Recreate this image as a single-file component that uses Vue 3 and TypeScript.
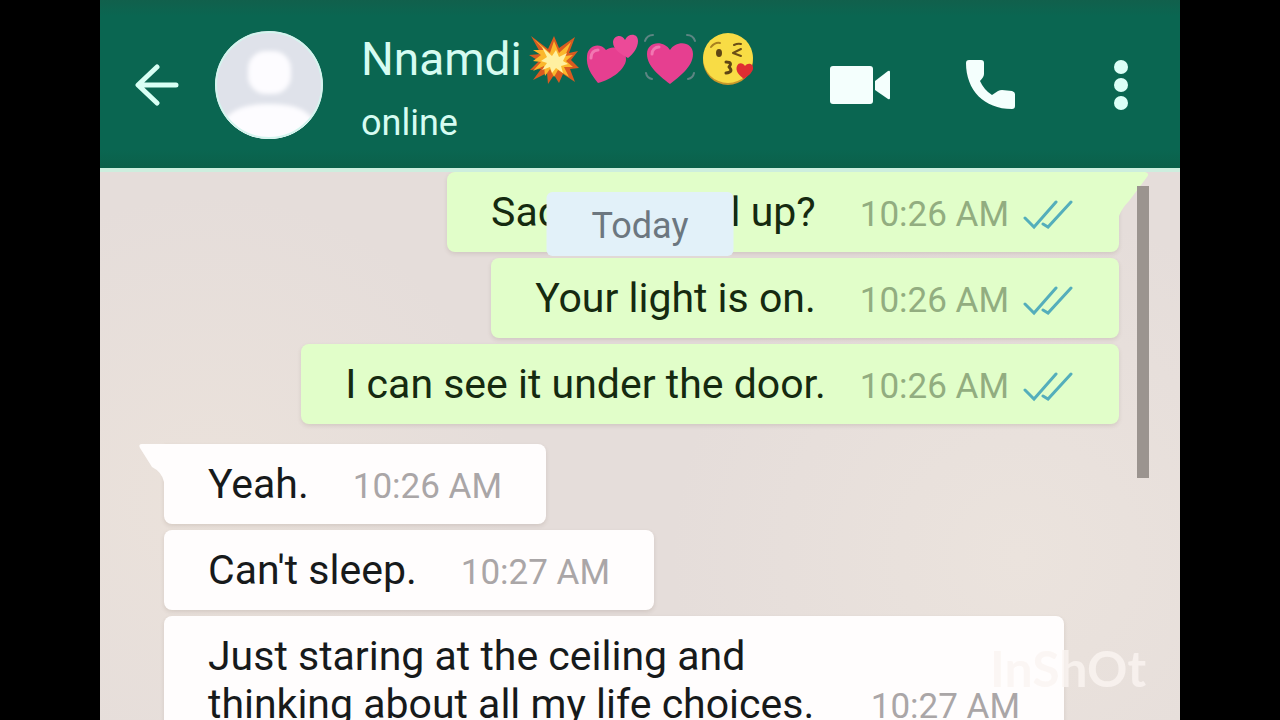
<script setup lang="ts">
interface Message {
  id: number
  text: string
  time: string
  snug?: boolean
}

const sent: Message[] = [
  { id: 1, text: 'Sade, you still up?', time: '10:26 AM' },
  { id: 2, text: 'Your light is on.', time: '10:26 AM' },
  { id: 3, text: 'I can see it under the door.', time: '10:26 AM', snug: true },
]

const received: Message[] = [
  { id: 4, text: 'Yeah.', time: '10:26 AM' },
  { id: 5, text: "Can't sleep.", time: '10:27 AM' },
  { id: 6, text: 'Just staring at the ceiling and thinking about all my life choices.', time: '10:27 AM' },
]
</script>

<template>
  <div class="stage">
    <main class="phone">
      <header class="bar">
        <button class="icon back" type="button" aria-label="Back">
          <svg width="44" height="44" viewBox="0 0 44 44" fill="none" stroke="#d8fff4" stroke-width="5" stroke-linecap="round" stroke-linejoin="round">
            <path d="M41 22H4M22 4L3 22l19 18" />
          </svg>
        </button>
        <svg class="avatar" viewBox="0 0 108 108" role="img" aria-label="Profile picture">
          <defs>
            <clipPath id="face"><circle cx="54" cy="54" r="54" /></clipPath>
            <filter id="soft"><feGaussianBlur stdDeviation="2" /></filter>
          </defs>
          <g clip-path="url(#face)">
            <rect width="108" height="108" fill="#dfe2ea" />
            <g fill="#fdfcff" filter="url(#soft)">
              <rect x="33" y="20" width="43" height="43" rx="18" />
              <path d="M10 88C18 78 30 73 54 73s36 5 44 15v34H10z" />
            </g>
            <circle cx="54" cy="54" r="53" fill="none" stroke="#d3f5ee" stroke-width="2" />
          </g>
        </svg>
        <div class="who">
          <h1 class="name">
            <span>Nnamdi</span>
            <span class="emojis">
              <svg viewBox="0 0 52 52" role="img" aria-label="Collision">
                <path d="M3 3l17 13 6-13 5 12L47 4l-6 16 9-2-7 9 8 8-9 1 5 13-12-8-4 9-5-8-6 9-1-11-14 7 8-11-11 1 9-9-10-6 12-1z" fill="#d95b20" />
                <path d="M6 6l16 14 4-12 5 12 12-11-6 14 8-1-7 6 7 6-9 0 5 10-11-7-4 7-4-8-5 7-1-10-11 5 8-9-8-1 8-6-8-5 11 0z" fill="#fbb72c" />
                <path d="M14 14l10 9 4-6 3 7 8-4-4 8 5 3-7 2 2 7-7-5-4 5-2-6-8 3 5-7-6-2 6-4z" fill="#fff0a0" />
              </svg>
              <svg viewBox="0 0 52 52" role="img" aria-label="Two hearts">
                <path d="M12 50C5 41 0 34 1 23 2 12 14 9 20 17c7-6 21-1 20 10-1 9-13 19-28 23z" fill="#e63f90" />
                <path d="M42 25c-7-4-15-8-15-16 1-7 9-8 12-2 3-7 13-7 13 1 0 7-5 13-10 17z" fill="#ec4a98" />
                <path d="M5 25c0-5 3-8 7-8" fill="none" stroke="#f277b2" stroke-width="3" stroke-linecap="round" />
              </svg>
              <svg viewBox="0 0 52 52" role="img" aria-label="Beating heart">
                <path d="M26 51C17 44 3 34 3 21 3 8 20 7 26 17 32 7 49 8 49 21c0 13-14 23-23 30z" fill="#e63f90" />
                <path d="M8 21c0-4 3-7 7-7" fill="none" stroke="#f277b2" stroke-width="3" stroke-linecap="round" />
                <path d="M1 8q2-6 8-6M43 2q6 0 8 6M2 40q1 5 6 6M50 40q-1 5-6 6" fill="none" stroke="#5d8583" stroke-width="2" stroke-linecap="round" />
              </svg>
              <svg viewBox="0 0 52 52" role="img" aria-label="Face blowing a kiss">
                <circle cx="26" cy="27" r="25" fill="#c9982b" />
                <circle cx="26" cy="25" r="25" fill="#f8dc45" />
                <path d="M9 14q4-5 9-4" fill="none" stroke="#a8801f" stroke-width="2" stroke-linecap="round" />
                <ellipse cx="17" cy="20" rx="3" ry="4" fill="#5e4514" />
                <path d="M39 16l-8 4 8 3M32 12q4-2 7-1" fill="none" stroke="#6b4f16" stroke-width="2" stroke-linecap="round" stroke-linejoin="round" />
                <path d="M24 29q7 0 3 5 5 5-3 6" fill="none" stroke="#5e4514" stroke-width="3" stroke-linecap="round" stroke-linejoin="round" />
                <path d="M42 46C37 42 33 38 35 33c2-4 6-3 8 0 3-4 9-2 8 3-1 4-5 7-9 10z" fill="#df2d32" />
              </svg>
            </span>
          </h1>
          <p class="status">online</p>
        </div>
        <button class="icon video" type="button" aria-label="Video call">
          <svg width="60" height="38" viewBox="0 0 60 38" fill="#f4fffd">
            <rect width="43" height="38" rx="3" />
            <path d="M45 15L58 5q2-1 2 1v26q0 2-2 1L45 24z" />
          </svg>
        </button>
        <button class="icon call" type="button" aria-label="Voice call">
          <svg width="50" height="50" viewBox="0 0 50 50" fill="#f4fffd">
            <path d="M3 0H15q3 0 3 3v11q0 3-4 7q4 9 12 14l6-4q2-1 4-1l10 1q3 1 3 3v12q0 3-3 3C18 49 0 30 0 3q0-3 3-3z" />
          </svg>
        </button>
        <button class="icon" type="button" aria-label="More options">
          <svg width="14" height="50" viewBox="0 0 14 50" fill="#dcfff7">
            <circle cx="7" cy="7" r="7" />
            <circle cx="7" cy="25" r="7" />
            <circle cx="7" cy="43" r="7" />
          </svg>
        </button>
      </header>

      <section class="chat">
        <ul class="group sent">
          <li v-for="(m, i) in sent" :key="m.id" class="bubble" :class="{ snug: m.snug }">
            <svg v-if="i === 0" class="tail" width="30" height="44" viewBox="0 0 30 44" fill="#e1fec9">
              <path d="M0 0H26q5 1 2 5L10 29Q3 36 0 44z" />
            </svg>
            <p class="text">{{ m.text }}</p>
            <time class="time">{{ m.time }}</time>
            <svg class="ticks" width="50" height="30" viewBox="0 0 50 30" fill="none" stroke="#54aebb" stroke-width="3" stroke-linecap="round" role="img" aria-label="Read">
              <path d="M2 18l9 9L33 2M20 24l5 3L48 2" />
            </svg>
          </li>
        </ul>
        <ul class="group received">
          <li v-for="(m, i) in received" :key="m.id" class="bubble">
            <svg v-if="i === 0" class="tail" width="28" height="38" viewBox="0 0 28 38" fill="#fffdfd">
              <path d="M28 0H4Q0 0 2 4L14 23Q24 28 26 38h2z" />
            </svg>
            <p class="text">{{ m.text }}</p>
            <time class="time">{{ m.time }}</time>
          </li>
        </ul>
        <div class="day">Today</div>
        <div class="scrollbar"></div>
        <div class="watermark">InShOt</div>
      </section>
    </main>
  </div>
</template>

<style>
body {
  margin: 0;
  background: #000;
}
</style>

<style scoped>
.stage {
  box-sizing: border-box;
  height: 100vh;
  padding: 0 100px;
  background: #000;
  font-family: Roboto, 'Noto Sans', sans-serif;
}
.phone {
  display: flex;
  flex-direction: column;
  height: 100%;
  overflow: hidden;
}
h1,
p,
ul {
  margin: 0;
  padding: 0;
}
.bar {
  display: flex;
  flex: none;
  align-items: center;
  box-sizing: border-box;
  height: 168px;
  padding: 2px 52px 0 35px;
  background: linear-gradient(#11604c, #0a6651 16px, #0a6651 150px, #0b6049);
  color: #d6fcf1;
}
.icon {
  display: flex;
  flex: none;
  padding: 0;
  border: 0;
  background: none;
}
.back {
  margin-right: 36px;
}
.avatar {
  flex: none;
  width: 108px;
  height: 108px;
  margin-right: 38px;
}
.who {
  flex: 1;
  min-width: 0;
  padding-top: 12px;
}
.name {
  display: flex;
  align-items: center;
  font-size: 46px;
  font-weight: 400;
  line-height: 64px;
}
.emojis {
  display: flex;
  gap: 6px;
  margin-left: 6px;
}
.emojis svg {
  width: 52px;
  height: 52px;
}
.status {
  font-size: 36px;
  line-height: 64px;
}
.video {
  margin-right: 76px;
}
.call {
  margin-right: 98px;
}
.chat {
  position: relative;
  flex: 1;
  min-height: 0;
  overflow: hidden;
  padding: 0 61px 0 64px;
  border-top: 4px solid #cdeede;
  background:
    radial-gradient(circle at 10% 60%, #ebe2db, transparent 30%),
    radial-gradient(circle at 85% 70%, #ebe3dd, transparent 35%),
    #e5ddda;
}
.group {
  display: flex;
  flex-direction: column;
  gap: 6px;
  list-style: none;
}
.sent {
  align-items: flex-end;
  margin-bottom: 20px;
}
.received {
  align-items: flex-start;
}
.bubble {
  position: relative;
  display: flex;
  align-items: flex-end;
  box-sizing: border-box;
  max-width: 900px;
  padding: 16px 44px;
  border-radius: 8px;
  background: #fffdfd;
  box-shadow: 0 2px 4px rgba(90, 70, 60, 0.14);
}
.sent .bubble {
  padding-right: 46px;
  background: #e1fec9;
}
.text {
  color: #171a1b;
  font-size: 41px;
  line-height: 48px;
}
.sent .text {
  color: #152a10;
}
.time {
  flex: none;
  margin-left: auto;
  padding-left: 44px;
  color: #aaa6a7;
  font-size: 35px;
  line-height: 42px;
}
.sent .time {
  color: #92ad80;
}
.snug .time {
  padding-left: 34px;
}
.ticks {
  flex: none;
  margin: 0 0 6px 14px;
}
.tail {
  position: absolute;
  top: 0;
}
.sent .tail {
  left: 100%;
}
.received .tail {
  right: 100%;
  margin-right: -2px;
}
.received .bubble:first-child {
  border-top-left-radius: 0;
}
.sent .bubble:first-child {
  border-top-right-radius: 0;
}
.day {
  position: absolute;
  top: 20px;
  left: 50%;
  box-sizing: border-box;
  min-width: 187px;
  padding: 10px 44px 6px;
  border-radius: 6px;
  background: #e2f1f9;
  color: #6c7780;
  font-size: 36px;
  line-height: 48px;
  text-align: center;
  transform: translateX(-50%);
}
.scrollbar {
  position: absolute;
  top: 14px;
  right: 31px;
  width: 12px;
  height: 292px;
  background: #9b948f;
}
.watermark {
  position: absolute;
  right: 34px;
  bottom: 24px;
  color: #fbf5f2;
  font-family: Lato, sans-serif;
  font-size: 50px;
  font-weight: 700;
  line-height: 56px;
  opacity: 0.8;
}
</style>
